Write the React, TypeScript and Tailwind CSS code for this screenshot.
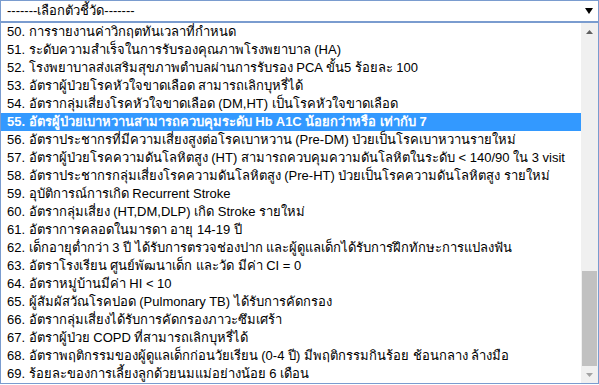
import React from "react";

const items = [
  "50. การรายงานค่าวิกฤตทันเวลาที่กำหนด",
  "51. ระดับความสำเร็จในการรับรองคุณภาพโรงพยาบาล (HA)",
  "52. โรงพยาบาลส่งเสริมสุขภาพตำบลผ่านการรับรอง PCA ขั้น5 ร้อยละ 100",
  "53. อัตราผู้ป่วยโรคหัวใจขาดเลือด สามารถเลิกบุหรี่ได้",
  "54. อัตรากลุ่มเสี่ยงโรคหัวใจขาดเลือด (DM,HT) เป็นโรคหัวใจขาดเลือด",
  "55. อัตรผู้ป่วยเบาหวานสามารถควบคุมระดับ Hb A1C น้อยกว่าหรือ เท่ากับ 7",
  "56. อัตราประชากรที่มีความเสี่ยงสูงต่อโรคเบาหวาน (Pre-DM) ป่วยเป็นโรคเบาหวานรายใหม่",
  "57. อัตราผู้ป่วยโรคความดันโลหิตสูง (HT) สามารถควบคุมความดันโลหิตในระดับ < 140/90 ใน 3 visit",
  "58. อัตราประชากรกลุ่มเสี่ยงโรคความดันโลหิตสูง (Pre-HT) ป่วยเป็นโรคความดันโลหิตสูง รายใหม่",
  "59. อุบัติการณ์การเกิด Recurrent Stroke",
  "60. อัตรากลุ่มเสี่ยง (HT,DM,DLP) เกิด Stroke รายใหม่",
  "61. อัตราการคลอดในมารดา อายุ 14-19 ปี",
  "62. เด็กอายุต่ำกว่า 3 ปี ได้รับการตรวจช่องปาก และผู้ดูแลเด็กได้รับการฝึกทักษะการแปลงฟัน",
  "63. อัตราโรงเรียน ศูนย์พัฒนาเด็ก และวัด มีค่า CI = 0",
  "64. อัตราหมู่บ้านมีค่า HI < 10",
  "65. ผู้สัมผัสวัณโรคปอด (Pulmonary TB) ได้รับการคัดกรอง",
  "66. อัตรากลุ่มเสี่ยงได้รับการคัดกรองภาวะซึมเศร้า",
  "67. อัตราผู้ป่วย COPD ที่สามารถเลิกบุหรี่ได้",
  "68. อัตราพฤติกรรมของผู้ดูแลเด็กก่อนวัยเรียน (0-4 ปี) มีพฤติกรรมกินร้อย ช้อนกลาง ล้างมือ",
  "69. ร้อยละของการเลี้ยงลูกด้วยนมแม่อย่างน้อย 6 เดือน",
];

export default function App() {
  return (
    <div
      className="w-[599px] h-[385px] bg-white text-black text-[13px] leading-[18px]"
      style={{ fontFamily: '"Liberation Sans", Tahoma, "Noto Sans", sans-serif' }}
    >
      <div className="h-[22px] border border-[#7a9ccf] flex items-center justify-between pl-[6px] pr-[3px]">
        <span>-------เลือกตัวชี้วัด-------</span>
        <svg width="9" height="6" viewBox="0 0 9 6" className="mr-[1px]">
          <path d="M0 0 H8 L4 6 Z" fill="#000" />
        </svg>
      </div>
      <div className="h-[362px] border border-[#7a9ccf] flex">
        <div className="flex-1 flex flex-col overflow-hidden">
          {items.map((t, i) => (
            <div
              key={i}
              className={
                "h-[18px] shrink-0 pl-[6px] whitespace-nowrap " +
                (i === 5 ? "bg-[#3399ff] text-white font-semibold" : "")
              }
            >
              {t}
            </div>
          ))}
        </div>
        <div className="w-[17px] bg-[#f0f0f0] flex flex-col">
          <div className="h-[17px] flex items-center justify-center">
            <svg width="7" height="4" viewBox="0 0 7 4">
              <path d="M0 4 L3.5 0 L7 4 Z" fill="#606060" />
            </svg>
          </div>
          <div className="flex-1 flex flex-col justify-end px-[1px]">
            <div className="h-[95px] bg-[#c1c1c1]" />
          </div>
          <div className="h-[17px] flex items-center justify-center">
            <svg width="7" height="4" viewBox="0 0 7 4">
              <path d="M0 0 L7 0 L3.5 4 Z" fill="#a3a3a3" />
            </svg>
          </div>
        </div>
      </div>
    </div>
  );
}
